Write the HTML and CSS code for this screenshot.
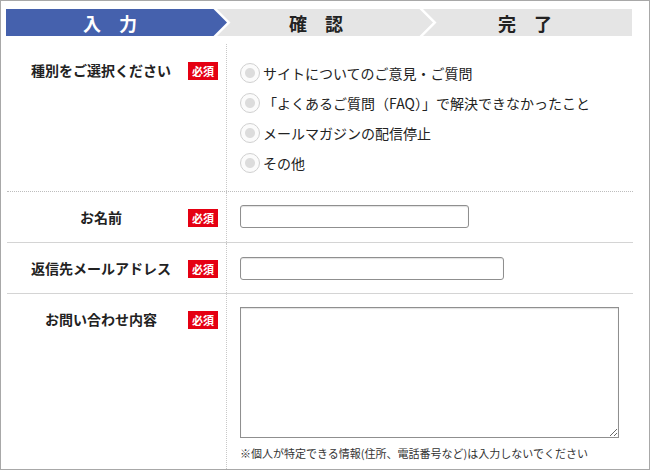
FILE: index.html
```html
<!DOCTYPE html>
<html lang="ja">
<head>
<meta charset="utf-8">
<title>お問い合わせ</title>
<link rel="stylesheet" href="styles.css">
</head>
<body>
<div class="page">
  <ol class="steps">
    <li class="step step-current"><span>入力</span></li>
    <li class="step step-mid"><span>確認</span></li>
    <li class="step step-last"><span>完了</span></li>
  </ol>
  <form class="form">
    <div class="row row-first">
      <div class="label label-first"><span class="label-text">種別をご選択ください</span><span class="req">必須</span></div>
      <div class="field field-radios">
        <label class="radio"><input type="radio" name="kind"><span>サイトについてのご意見・ご質問</span></label>
        <label class="radio"><input type="radio" name="kind"><span>「よくあるご質問（FAQ）」で解決できなかったこと</span></label>
        <label class="radio"><input type="radio" name="kind"><span>メールマガジンの配信停止</span></label>
        <label class="radio"><input type="radio" name="kind"><span>その他</span></label>
      </div>
    </div>
    <div class="row row-mid">
      <div class="label"><span class="label-text">お名前</span><span class="req">必須</span></div>
      <div class="field"><input class="input input-name" type="text"></div>
    </div>
    <div class="row row-mid">
      <div class="label"><span class="label-text">返信先メールアドレス</span><span class="req">必須</span></div>
      <div class="field field-mail"><input class="input input-mail" type="text"></div>
    </div>
    <div class="row row-last">
      <div class="label"><span class="label-text">お問い合わせ内容</span><span class="req">必須</span></div>
      <div class="field">
        <textarea class="textarea"></textarea>
        <p class="note">※個人が特定できる情報(住所、電話番号など)は入力しないでください</p>
      </div>
    </div>
  </form>
</div>
</body>
</html>
```

FILE: styles.css
```css
* { box-sizing: border-box; }

body {
  margin: 0;
  background: #fff;
  font-family: "Noto Sans CJK JP", "Noto Sans", sans-serif;
  color: #222;
}

.page {
  width: 650px;
  height: 470px;
  border: 1px solid #a8a8a8;
  padding: 8px 0 0 5px;
  display: flex;
  flex-direction: column;
  overflow: hidden;
}

/* progress steps */
.steps {
  list-style: none;
  margin: 0;
  padding: 0;
  display: flex;
  width: 626px;
  height: 27px;
  flex: none;
}

.step {
  height: 27px;
  display: flex;
  align-items: center;
  justify-content: center;
  font-size: 18px;
  font-weight: bold;
  letter-spacing: 18px;
  line-height: 1;
  background: #e5e5e5;
  color: #222;
}

.step-current {
  width: 221px;
  padding-left: 5px;
  background: #4561ad;
  color: #fff;
  clip-path: polygon(0 0, calc(100% - 13.5px) 0, 100% 50%, calc(100% - 13.5px) 100%, 0 100%);
}

.step-mid {
  width: 216px;
  margin-left: -10px;
  padding: 0 13px;
  clip-path: polygon(0 0, calc(100% - 13.5px) 0, 100% 50%, calc(100% - 13.5px) 100%, 0 100%, 13.5px 50%);
}

.step-last {
  flex: 1;
  margin-left: -10px;
  padding-left: 13px;
  clip-path: polygon(0 0, 100% 0, 100% 100%, 0 100%, 13.5px 50%);
}

/* form */
.form {
  flex: 1;
  display: flex;
  flex-direction: column;
  margin: 8px 0 0 1px;
  width: 626px;
}

.row {
  display: grid;
  grid-template-columns: 220px 1fr;
  border-bottom: 1px solid #d4d4d4;
  flex: none;
}

.row-first {
  height: 148px;
  border-bottom: 1px dotted #bdbdbd;
}

.row-mid { height: 51px; }

.row-last {
  flex: 1;
  border-bottom: none;
}

.label {
  border-right: 1px dotted #c8c8c8;
  display: flex;
  align-items: flex-start;
  padding: 15px 8px 0 7px;
}

.label-first { padding-top: 16px; }

.label-text {
  flex: 1;
  text-align: center;
  font-size: 14px;
  font-weight: bold;
  line-height: 20px;
  color: #222;
}

.req {
  width: 30px;
  height: 18px;
  margin-top: 2px;
  background: #e50012;
  color: #fff;
  font-size: 11px;
  font-weight: bold;
  line-height: 1;
  display: flex;
  align-items: center;
  justify-content: center;
}

.field {
  padding: 13px 0 0 13px;
}

.field-mail { padding-top: 14px; }

.field-radios {
  padding-top: 14px;
  display: flex;
  flex-direction: column;
}

.radio {
  display: flex;
  align-items: center;
  height: 30px;
  gap: 3px;
  font-size: 14px;
  color: #222;
}

.radio input {
  appearance: none;
  -webkit-appearance: none;
  width: 20px;
  height: 20px;
  margin: 0;
  border-radius: 50%;
  border: 1px solid #d0d0d0;
  background: radial-gradient(circle, #dcdcdc 0 4.5px, #fbfbfb 5.5px);
  flex: none;
}

.input {
  display: block;
  height: 23px;
  margin: 0;
  padding: 0 4px;
  border: 1px solid #8f8f8f;
  border-radius: 3px;
  box-shadow: inset 0 1px 1px rgba(0, 0, 0, 0.12);
  font: inherit;
  font-size: 13px;
  background: #fff;
}

.input-name { width: 229px; }
.input-mail { width: 264px; }

.textarea {
  display: block;
  width: 379px;
  height: 131px;
  margin: 0;
  border: 1px solid #8f8f8f;
  box-shadow: inset 0 1px 1px rgba(0, 0, 0, 0.12);
  resize: both;
  font: inherit;
}

.note {
  margin: 7px 0 0;
  font-size: 11px;
  line-height: 16px;
  color: #333;
}
```
